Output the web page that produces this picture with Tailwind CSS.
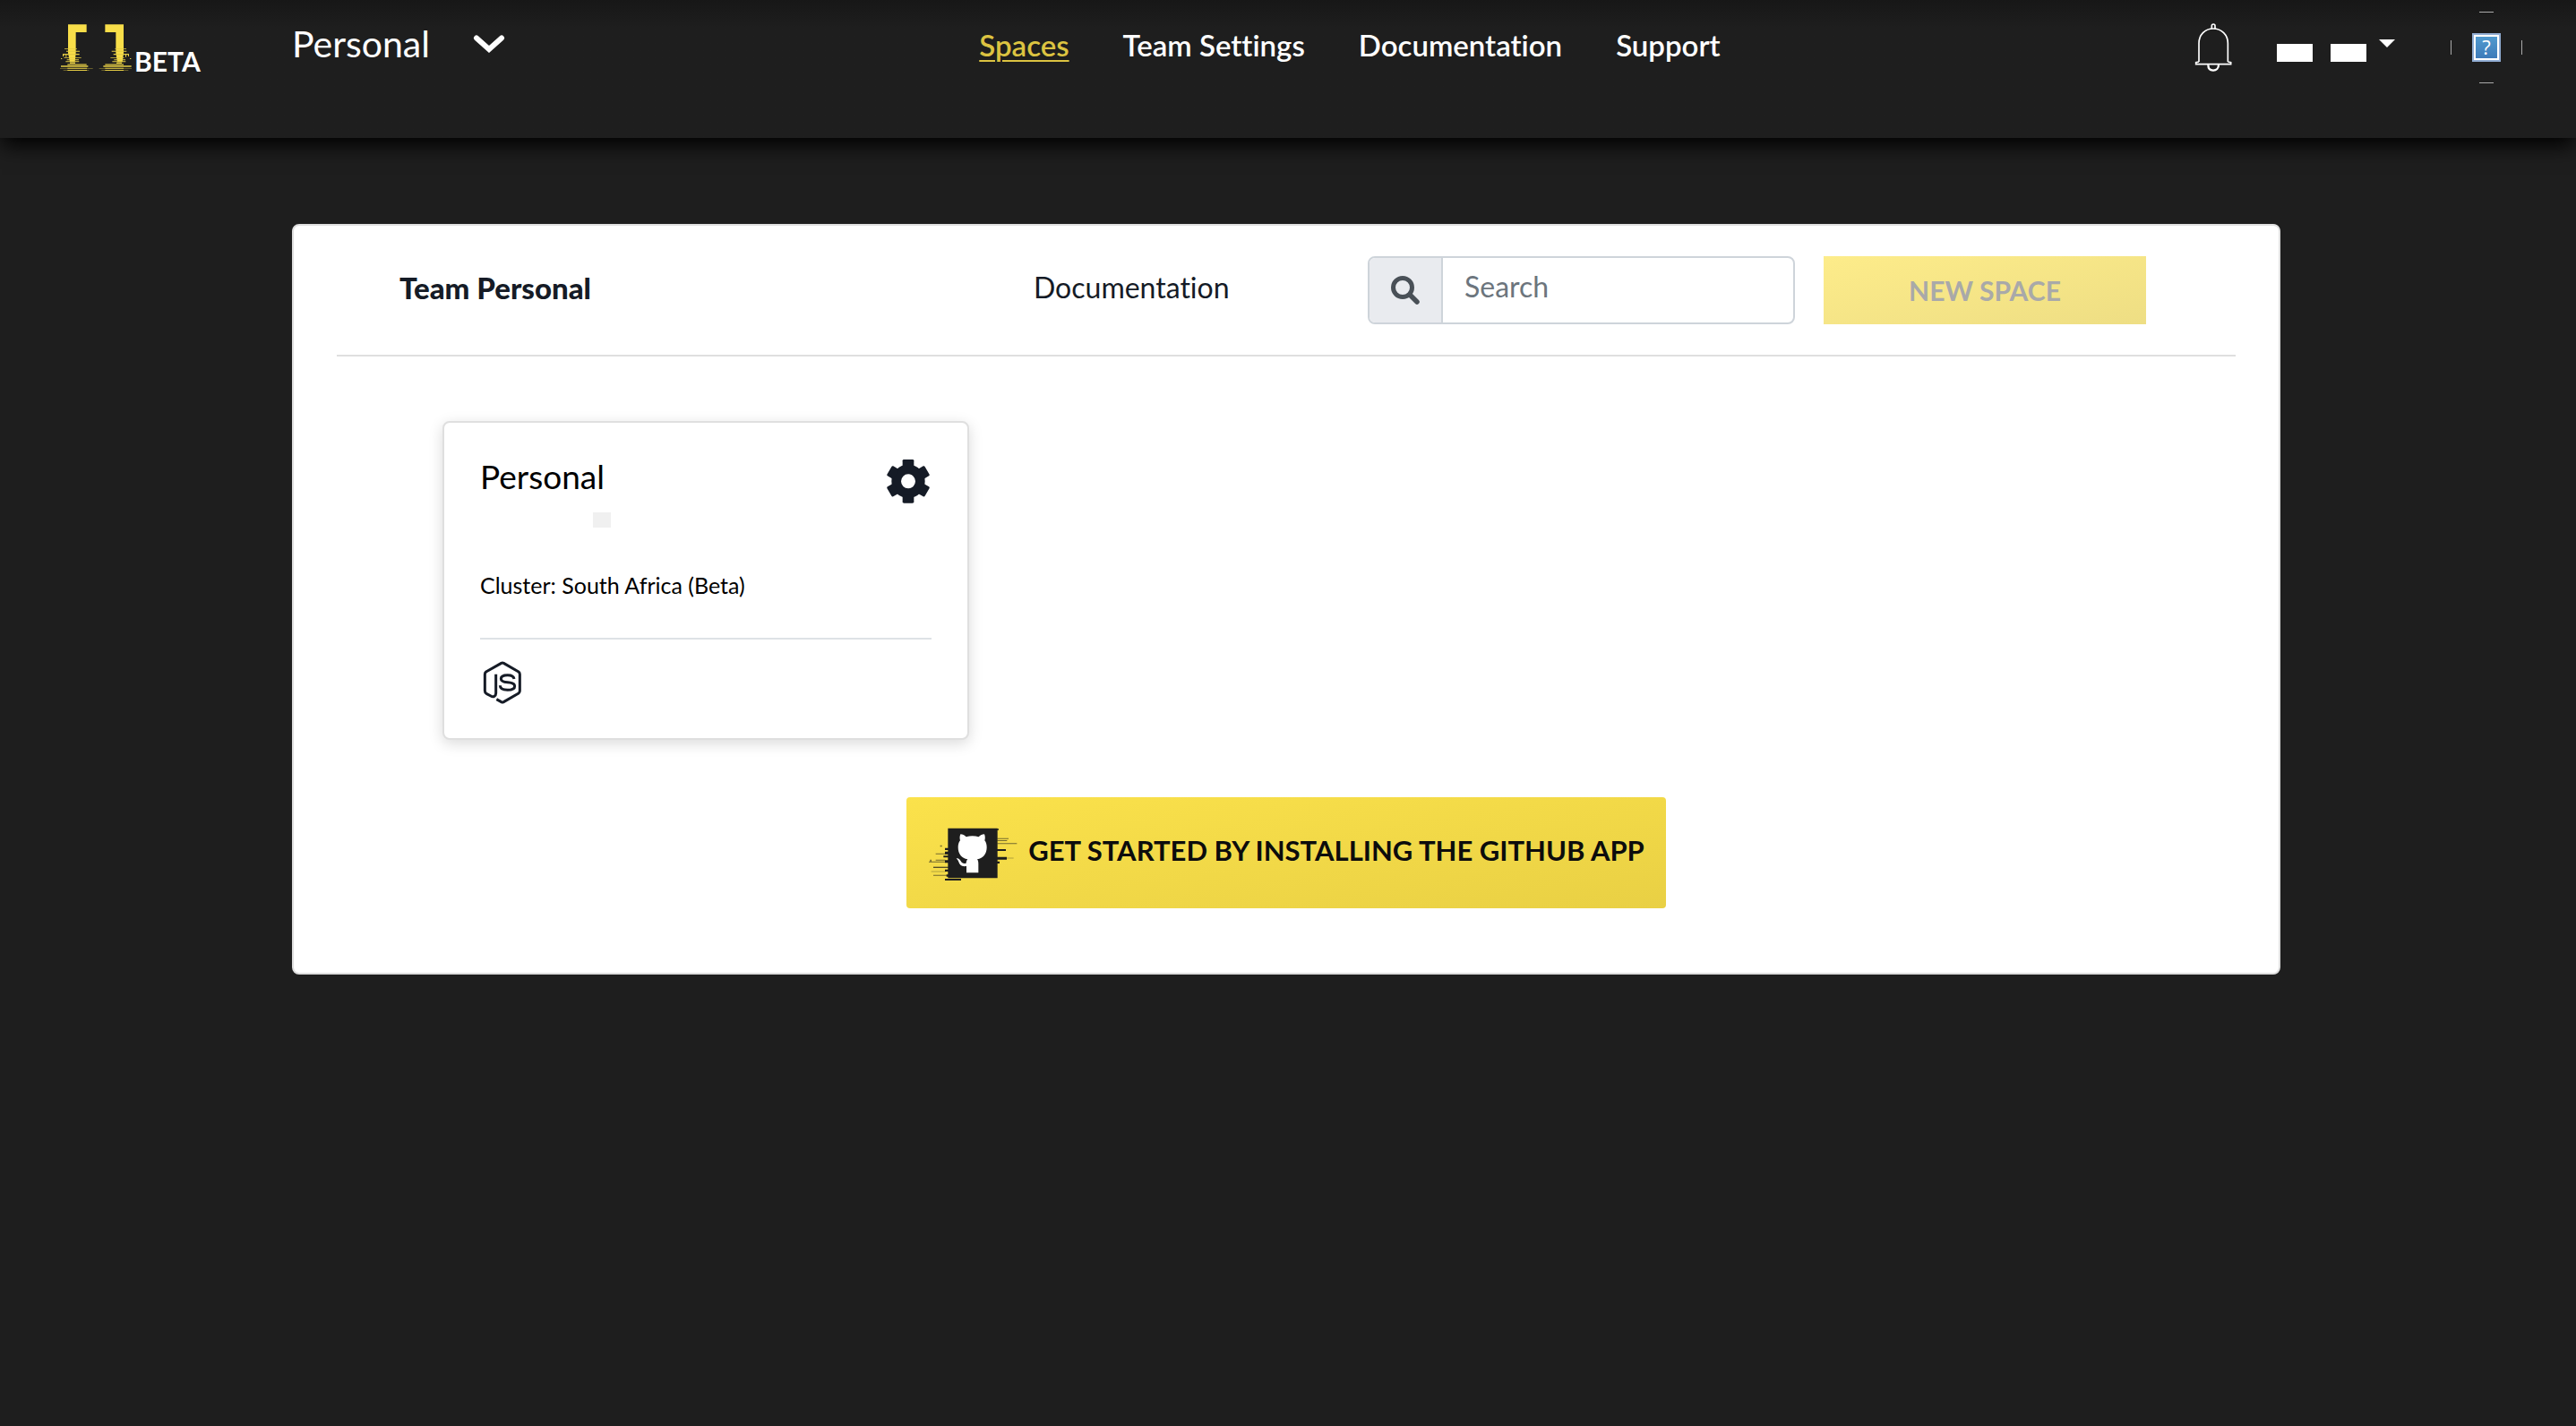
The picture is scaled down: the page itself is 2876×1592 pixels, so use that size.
<!DOCTYPE html>
<html lang="en">
<head>
<meta charset="utf-8">
<meta name="viewport" content="width=device-width, initial-scale=1">
<title>Spaces</title>
<script src="https://cdn.jsdelivr.net/npm/@tailwindcss/browser@4"></script>
</head>
<body class="min-h-screen bg-[#1e1e1e] font-['Lato','Open_Sans',sans-serif] text-black [font-variant-ligatures:none]">
<header class="bg-[#1e1e1e] bg-linear-to-b from-[#171717] to-[#1e1e1e] to-20% pt-[13px] pr-[60px] pb-[61px] pl-[66px] shadow-[0_10px_22px_-2px_#000000]">
  <div class="flex h-20 items-center justify-between">
    <div class="flex items-center">
      <a href="#" aria-label="Home" class="flex w-[260px] items-end gap-0.5">
        <svg class="h-[53px] w-[82px]" viewBox="48 48 246 159" fill="#f8de49" aria-hidden="true">
          <path d="M78 49h62v26h-36v70l-3 30H84l-6-30zM202 49h62v96l-4 30h-17l-5-30V75h-36z"/>
          <g fill="#e3cb44">
            <path d="M66 130h42v2H66zM72 137h45v3H72zM60 147h56v4H60zM60 151h4v5h-4zM70 151h3v7h-3zM54 162h4v3h-4zM64 160h40v2H64zM82 160h40v2H82zM74 166h40v3H74zM70 172h45v3H70zM84 176h18v4H84z"/>
            <path d="M235 130h38v2h-38zM224 137h50v3h-50zM230 147h52v4h-52zM279 151h3v5h-3zM270 151h3v7h-3zM285 162h4v3h-4zM220 160h46v2h-46zM232 166h38v3h-38zM226 172h45v3h-45zM240 176h18v4h-18z"/>
            <path d="M76 181h64v5H76zM202 181h62v5h-62z" opacity=".7"/>
            <path d="M54 187h91v4H54zM196 187h94v4h-94z"/>
            <path d="M76 194h65v3H76zM202 194h62v3h-62zM76 201h65v3H76zM202 201h62v3h-62z"/>
            <path d="M51 195h110v2H51zM182 195h109v2H182zM62 201h86v2H62zM190 201h90v2h-90z" opacity=".5"/>
          </g>
        </svg>
        <span class="text-[30px] leading-6 font-bold text-white">BETA</span>
      </a>
      <button class="flex items-center gap-12 pb-2 text-[41px] leading-12 text-white">
        <span>Personal</span>
        <svg class="h-5 w-9" viewBox="0 0 36 20" fill="none" stroke="currentColor" stroke-width="6" stroke-linecap="round" stroke-linejoin="miter" aria-hidden="true"><path d="M4 3.500L18 16 32 3.500"/></svg>
      </button>
    </div>
    <nav class="flex gap-[60px] pb-1.5 text-[33px] leading-10 font-semibold text-white">
      <a href="#" class="text-[#dcc341] underline decoration-2 underline-offset-4">Spaces</a>
      <a href="#">Team Settings</a>
      <a href="#">Documentation</a>
      <a href="#">Support</a>
    </nav>
    <div class="flex items-center">
      <button aria-label="Notifications">
        <svg class="h-[54px] w-[42px]" viewBox="152 78 126 162" fill="none" stroke="#fff" stroke-width="5" aria-hidden="true">
          <path d="M210 97V86q0-5 5.500-5t5.500 5v11M167 207V145c0-28 20-49 48-49s49 21 49 49v62M167 207l-10 2v6h117v-6l-10-2"/>
          <path d="M198 217c0 12 7 19 17 19s18-7 18-19" stroke-width="7"/>
        </svg>
      </button>
      <button class="ml-[50px] flex items-center" aria-label="Account menu">
        <span class="flex gap-5 pt-3"><span class="h-5 w-10 bg-white"></span><span class="h-5 w-10 bg-white"></span></span>
        <svg class="mb-2.5 ml-3.5 h-[9px] w-[18px]" viewBox="0 0 18 9" fill="#fff" aria-hidden="true"><path d="M0 0h18L9 9z"/></svg>
      </button>
      <svg class="ml-[62px] h-20 w-20" viewBox="0 0 80 80" role="img" aria-label="Avatar">
        <defs><linearGradient id="q" x1="0" y1="0" x2="0" y2="1"><stop offset="0" stop-color="#519bd0"/><stop offset="1" stop-color="#3e7ab8"/></linearGradient></defs>
        <path d="M32 .5h16M32 79.500h16M.5 32v16M79.500 32v16" stroke="#aaa"/>
        <path d="M24 24h32v32H24z" fill="#91add3"/>
        <path d="M27 27h26v26H27z" fill="url(#q)" stroke="#fff" stroke-width="2"/>
        <text x="40" y="48" text-anchor="middle" font-family="Open Sans" font-size="22" fill="#fff">?</text>
      </svg>
    </div>
  </div>
</header>

<main class="px-6 pt-24 pr-7 pb-24">
  <section class="mx-auto max-w-[2220px] rounded-lg border-2 border-[#dfdfdf] bg-white px-12 pb-[72px]">
    <div class="grid grid-cols-[708fr_373fr_509fr_360fr] items-center border-b-2 border-[#dfdfdf] py-[34px] pr-[100px] pl-[70px]">
      <h1 class="pb-1.5 text-[33px] leading-10 font-black text-[#151b26]">Team Personal</h1>
      <a href="#" class="pb-1.5 text-[32px] leading-10 text-[#151b26]">Documentation</a>
      <div class="mr-8 flex h-[76px] overflow-hidden rounded-lg border-2 border-[#ced4da]">
        <label for="search" class="flex w-[82px] items-center justify-center border-r-2 border-[#ced4da] bg-[#e9ebef]">
          <svg class="h-8 w-8" viewBox="0 0 32 32" fill="none" stroke="#495057" role="img" aria-label="Search"><circle cx="13" cy="13" r="10.500" stroke-width="5"/><path d="M21 21l8 8" stroke-width="5.500" stroke-linecap="round"/></svg>
        </label>
        <input id="search" type="text" placeholder="Search" class="min-w-0 flex-1 px-6 pb-2 text-[32px] leading-10 outline-none placeholder:text-[#6c757d]">
      </div>
      <button disabled class="h-[76px] bg-linear-to-br from-[#fdec8a] to-[#eede84] text-[30px] leading-10 font-bold text-[#a9a9a9]">NEW SPACE</button>
    </div>

    <div class="mt-[72px] pl-[118px]">
      <article class="max-w-[588px] rounded-lg border-2 border-[#dfdfdf] bg-white p-10 pb-[38px] shadow-[0_4px_16px_rgba(0,0,0,0.15)]">
        <div class="flex items-start justify-between">
          <h2 class="text-[37px] leading-10">Personal</h2>
          <button aria-label="Space settings" class="mr-0.5">
            <svg class="h-[50px] w-12" viewBox="60 66 144 150" fill="#151b26" aria-hidden="true">
              <defs><path id="t" d="M113 96V73q0-4 5-4h28q5 0 5 4v23z"/></defs>
              <circle cx="132" cy="142" r="40" fill="none" stroke="#151b26" stroke-width="32"/>
              <use href="#t"/><use href="#t" transform="rotate(60 132 142)"/><use href="#t" transform="rotate(120 132 142)"/><use href="#t" transform="rotate(180 132 142)"/><use href="#t" transform="rotate(240 132 142)"/><use href="#t" transform="rotate(300 132 142)"/>
            </svg>
          </button>
        </div>
        <div class="mt-2.5 ml-[126px] h-[17px] w-5 bg-[#f0f0f0]"></div>
        <p class="mt-12 text-[25px] leading-8">Cluster: South Africa (Beta)</p>
        <hr class="mt-[43px] border-t-2 border-[#dee2e6]">
        <svg class="mt-6 ml-0.5 h-12 w-[45px]" viewBox="54 54 135 144" fill="none" stroke="#151b26" stroke-width="9" stroke-linejoin="round" role="img" aria-label="Node.js">
          <path d="M101 98v64c0 10-9 14-17 9L69 163q-5-3-5-9V98q0-5 4-8L119 61q4-2 8 0l50 29q4 3 4 8v56q0 5-4 8l-50 29q-4 2-8 0l-16-9"/>
          <path d="M162 114c-1-9-7-13-22-13-14 0-22 4-22 12 0 9 8 11 22 12 15 1 24 3 24 13 0 9-8 13-24 13-17 0-25-5-25-15" stroke-width="9"/>
        </svg>
      </article>
    </div>

    <div class="mt-16 flex justify-center">
      <button class="flex h-[124px] items-center gap-3 rounded-sm bg-linear-to-br from-[#fbe24b] to-[#e9d044] px-6 text-[31px] leading-10 font-bold text-[#0c0c0c]">
        <svg class="mt-1 h-[60px] w-[100px]" viewBox="24 40 300 180" fill="#1e1e1e" aria-hidden="true">
          <path d="M91 42h166v167H91zM81 108h12v7H81zM81 120h12v9H81zM76 134h17v6H76zM81 149h12v9H81zM42 171h50v3H42zM81 180h12v7H81zM86 197h8v7h-8zM81 211h54v6H81zM256 112h29v6h-29zM256 138h32v9h-32zM256 153h8v7h-8zM256 44h5v4h-5z"/>
          <path d="M50 126h42v3H50zM50 147h32v3H50zM27 153h55v3H27zM31 147h5v6h-5zM35 186h50v2H35zM42 198h45v3H42zM65 99h6v5h-6zM256 75h38v3h-38zM256 82h33v3h-33zM256 92h66v3h-66zM256 141h55v2h-55z" opacity=".6"/>
          <path fill="#fff" d="M133 62c7 0 14 4 19 9q21-7 42 0c5-5 12-9 19-9 3 7 3 14 1 21 5 6 7 14 7 23 0 22-12 36-32 40 3 4 4 9 4 15v30h-40v-22c-18 2-22-4-26-14-2-5-4-8-8-12 7-2 12 3 15 9 4 7 9 9 18 7 0-5 2-10 5-13-20-4-32-18-32-40 0-9 2-17 7-23-2-7-2-14 1-21z"/>
        </svg>
        <span class="pb-1.5">GET STARTED BY INSTALLING THE GITHUB APP</span>
      </button>
    </div>
  </section>
</main>
</body>
</html>
